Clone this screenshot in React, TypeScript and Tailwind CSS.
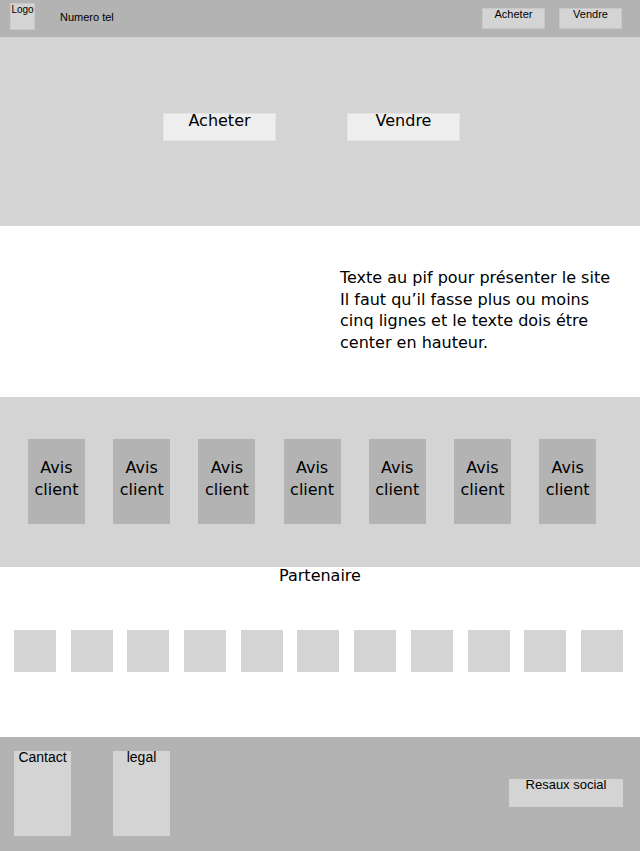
const sans = "font-['Liberation_Sans',Arial,sans-serif]";
const deja = "font-['DejaVu_Sans',Verdana,sans-serif]";

const Header = () => (
	<header className={`flex items-start h-[37px] bg-[#b3b3b3] text-black ${sans}`}>
		{/* logo placeholder */}
		<div className="ml-[10px] mt-[3px] w-[25px] h-[27px] bg-[#d4d4d4] border border-[#c8c8c8] text-[10px] leading-none text-center pt-[1px]">
			Logo
		</div>
		<span className="ml-[25px] mt-[12px] text-[11px] leading-none">Numero tel</span>

		<nav className="ml-auto mr-[18px] mt-[8px] flex gap-[14px]">
			{["Acheter", "Vendre"].map((label) => (
				<div
					key={label}
					className="w-[63px] h-[21px] bg-[#d4d4d4] border border-[#c8c8c8] text-[11px] leading-none text-center"
				>
					{label}
				</div>
			))}
		</nav>
	</header>
);

const Hero = () => (
	<section className={`h-[189px] bg-[#d4d4d4] pl-[163px] pt-[76px] flex items-start gap-[71px] ${deja}`}>
		{["Acheter", "Vendre"].map((label) => (
			<div key={label} className="w-[113px] h-[28px] bg-[#eeeeee] border border-[#e4e4e4] text-[16px] leading-[14px] text-center text-black">
				{label}
			</div>
		))}
	</section>
);

const Intro = () => (
	<section className={`h-[171px] bg-white pl-[340px] pt-[41px] ${deja}`}>
		<p className="text-[16px] leading-[21.7px] text-black">
			Texte au pif pour présenter le site
			<br />
			Il faut qu’il fasse plus ou moins
			<br />
			cinq lignes et le texte dois étre
			<br />
			center en hauteur.
		</p>
	</section>
);

const Reviews = () => (
	<section className={`h-[170px] bg-[#d4d4d4] pl-[28px] pt-[42px] flex items-start gap-[28.2px] ${deja}`}>
		{Array.from({ length: 7 }).map((_, i) => (
			<div key={i} className="w-[57px] h-[85px] bg-[#b3b3b3] pt-[18px] text-center text-[16px] leading-[22px] text-black">
				Avis
				<br />
				client
			</div>
		))}
	</section>
);

const Partners = () => (
	<section className={`h-[170px] bg-white ${deja}`}>
		<h2 className="text-center text-[16px] leading-[18px] text-black">Partenaire</h2>
		<div className="mt-[45px] pl-[14px] flex gap-[14.7px]">
			{Array.from({ length: 11 }).map((_, i) => (
				<div key={i} className="w-[42px] h-[42px] bg-[#d4d4d4]" />
			))}
		</div>
	</section>
);

const Footer = () => (
	<footer className={`h-[114px] bg-[#b3b3b3] flex items-start pt-[14px] text-black ${sans}`}>
		<div className="ml-[14px] w-[57px] h-[85px] bg-[#d4d4d4] text-[14px] leading-[12px] text-center">Cantact</div>
		<div className="ml-[42px] w-[57px] h-[85px] bg-[#d4d4d4] text-[14px] leading-[12px] text-center">legal</div>
		<div className="ml-auto mr-[17px] mt-[28px] w-[114px] h-[28px] bg-[#d4d4d4] text-[13px] leading-[12px] text-center">
			Resaux social
		</div>
	</footer>
);

export default function App() {
	return (
		<div className="w-[640px] h-[851px] overflow-hidden bg-white">
			<Header />
			<Hero />
			<Intro />
			<Reviews />
			<Partners />
			<Footer />
		</div>
	);
}
